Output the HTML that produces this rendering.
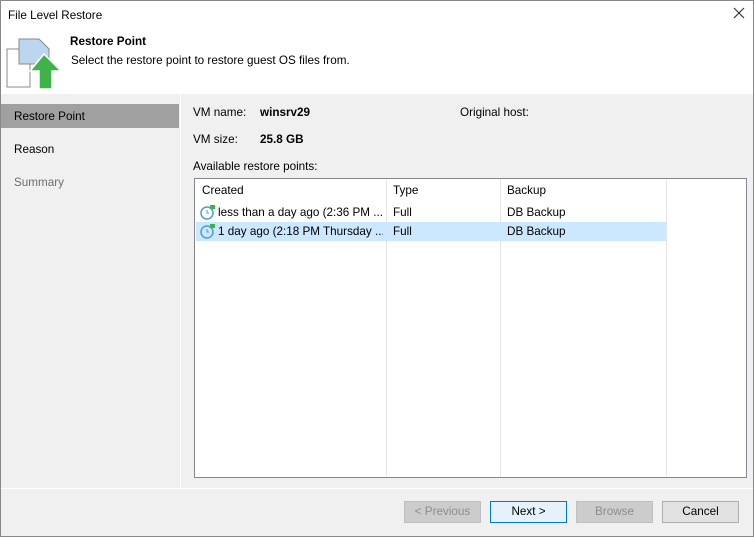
<!DOCTYPE html><html><head><style>
body{margin:0;width:754px;height:537px;overflow:hidden;font-family:"Liberation Sans",sans-serif;font-size:11.7px;color:#000;}
.win{position:absolute;left:0;top:0;width:754px;height:537px;background:#f0f0f0;}
.a{position:absolute;white-space:nowrap;}
.btn{position:absolute;top:501px;width:75px;height:20px;border:1px solid #adadad;background:#e1e1e1;text-align:center;line-height:20px;}
.dis{background:#cccccc;border-color:#bfbfbf;color:#8d8d8d;}
.row{position:absolute;left:1px;height:19px;width:470px;line-height:19px;}
</style></head><body><div class="win">
<div class="a" style="left:0;top:0;width:754px;height:94px;background:#fff"></div>
<div class="a" style="left:8px;top:9px;">File Level Restore</div>
<svg class="a" style="left:733px;top:7px" width="12" height="12"><path d="M1 1L11 11M11 1L1 11" stroke="#333" stroke-width="1.2"/></svg>
<svg class="a" style="left:5px;top:34px" width="56" height="56">
<path d="M2 15h15l8 8v30H2z" fill="#fff" stroke="#888"/>
<path d="M14 5h20l10 10v15H14z" fill="#bcd6ef" stroke="#888"/>
<path d="M39 20l17 17h-9v18h-13V37h-9z" fill="#3db34a" stroke="#fff" stroke-width="1.5"/>
</svg>
<div class="a" style="left:70px;top:35px;font-weight:bold">Restore Point</div>
<div class="a" style="left:71px;top:54px;">Select the restore point to restore guest OS files from.</div>
<div class="a" style="left:180px;top:94px;width:1px;height:394px;background:#fff"></div>
<div class="a" style="left:0;top:104px;width:179px;height:24px;background:#a0a0a0"></div>
<div class="a" style="left:14px;top:110px;">Restore Point</div>
<div class="a" style="left:14px;top:143px;">Reason</div>
<div class="a" style="left:14px;top:176px;color:#6d6d6d">Summary</div>
<div class="a" style="left:193px;top:106px;">VM name:</div>
<div class="a" style="left:260px;top:106px;font-weight:bold">winsrv29</div>
<div class="a" style="left:460px;top:106px;">Original host:</div>
<div class="a" style="left:193px;top:133px;">VM size:</div>
<div class="a" style="left:260px;top:133px;font-weight:bold">25.8 GB</div>
<div class="a" style="left:193px;top:160px;">Available restore points:</div>
<div class="a" style="left:194px;top:178px;width:551px;height:298px;background:#fff;border:1px solid #828790">
<div class="a" style="left:191px;top:0;width:1px;height:298px;background:#e5e5e5"></div>
<div class="a" style="left:305px;top:0;width:1px;height:298px;background:#e5e5e5"></div>
<div class="a" style="left:471px;top:0;width:1px;height:298px;background:#e5e5e5"></div>
<div class="a" style="left:7px;top:5px">Created</div><div class="a" style="left:198px;top:5px">Type</div><div class="a" style="left:312px;top:5px">Backup</div>
<div class="row" style="top:43px;background:#cce8ff"></div>
<div class="a" style="left:23px;top:27px;width:165px;overflow:hidden">less than a day ago (2:36 PM ...</div><div class="a" style="left:198px;top:27px">Full</div><div class="a" style="left:312px;top:27px">DB Backup</div>
<div class="a" style="left:23px;top:46px;width:165px;overflow:hidden">1 day ago (2:18 PM Thursday ...</div><div class="a" style="left:198px;top:46px">Full</div><div class="a" style="left:312px;top:46px">DB Backup</div>
<svg class="a" style="left:5px;top:25px" width="16" height="16"><circle cx="7" cy="9" r="6" fill="none" stroke="#4a9fd6" stroke-width="1.5"/><path d="M7 6v3h2" stroke="#4a9fd6" fill="none"/><path d="M10 1h5v4h-5z" fill="#3db34a"/></svg>
<svg class="a" style="left:5px;top:44px" width="16" height="16"><circle cx="7" cy="9" r="6" fill="none" stroke="#4a9fd6" stroke-width="1.5"/><path d="M7 6v3h2" stroke="#4a9fd6" fill="none"/><path d="M10 1h5v4h-5z" fill="#3db34a"/></svg>
</div>
<div class="a" style="left:0;top:488px;width:754px;height:1px;background:#fff"></div>
<div class="btn dis" style="left:404px">&lt; Previous</div>
<div class="btn" style="left:490px;background:#e5f1fb;border-color:#0078d7">Next &gt;</div>
<div class="btn dis" style="left:576px">Browse</div>
<div class="btn" style="left:662px">Cancel</div>
<div class="a" style="left:0;top:0;width:752px;height:535px;border:1px solid #888;pointer-events:none"></div>
</div></body></html>
